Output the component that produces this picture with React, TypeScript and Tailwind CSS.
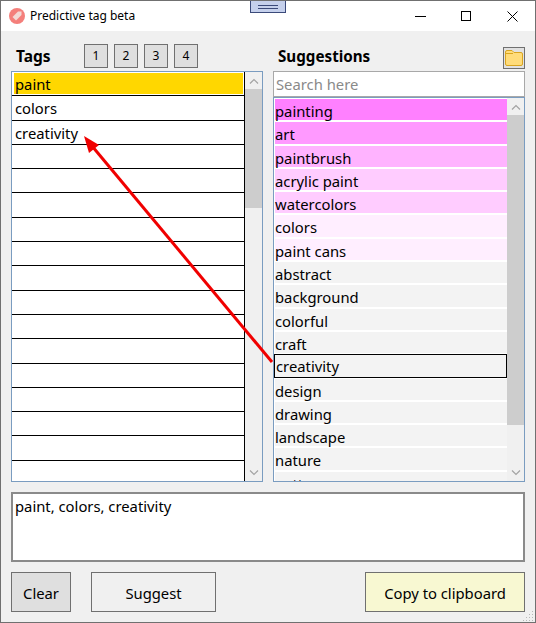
import React from 'react'

const font = "font-['Noto_Sans','Open_Sans',sans-serif]"

const suggestions = [
  { name: 'painting', bg: 'bg-[#ff80ff]' },
  { name: 'art', bg: 'bg-[#ff99ff]' },
  { name: 'paintbrush', bg: 'bg-[#ffb3ff]' },
  { name: 'acrylic paint', bg: 'bg-[#ffccff]' },
  { name: 'watercolors', bg: 'bg-[#ffccff]' },
  { name: 'colors', bg: 'bg-[#ffeeff]' },
  { name: 'paint cans', bg: 'bg-[#ffeeff]' },
  { name: 'abstract', bg: 'bg-[#f3f3f3]' },
  { name: 'background', bg: 'bg-[#f3f3f3]' },
  { name: 'colorful', bg: 'bg-[#f3f3f3]' },
  { name: 'craft', bg: 'bg-[#f3f3f3]' },
  { name: 'creativity', bg: 'bg-[#f3f3f3]', selected: true },
  { name: 'design', bg: 'bg-[#f3f3f3]' },
  { name: 'drawing', bg: 'bg-[#f3f3f3]' },
  { name: 'landscape', bg: 'bg-[#f3f3f3]' },
  { name: 'nature', bg: 'bg-[#f3f3f3]' },
  { name: 'pattern', bg: 'bg-[#f3f3f3]' },
]

const tags = ['paint', 'colors', 'creativity', '', '', '', '', '', '', '', '', '', '', '', '', '', '']

function Chevron({ up }: { up?: boolean }) {
  return (
    <div className="h-[17px] flex items-center justify-center bg-[#f0f0f0] shrink-0">
      <svg width="10" height="6" viewBox="0 0 10 6" fill="none" stroke="#a3a3a3" strokeWidth="1.2">
        <path d={up ? 'M1 5.5 L5 1.5 L9 5.5' : 'M1 0.5 L5 4.5 L9 0.5'} />
      </svg>
    </div>
  )
}

function Scrollbar({ thumb }: { thumb: string }) {
  return (
    <div className="w-[17px] shrink-0 flex flex-col bg-[#f0f0f0]">
      <Chevron up />
      <div className={`${thumb} bg-[#cdcdcd] shrink-0`} />
      <div className="grow" />
      <Chevron />
    </div>
  )
}

export default function App() {
  return (
    <div className={`${font} relative w-[536px] h-[623px] overflow-hidden flex flex-col bg-[#f0f0f0] border border-[#707070] text-black`}>
      {/* title bar */}
      <div className="h-[30px] shrink-0 bg-white flex items-center pl-[8px]">
        <div className="w-4 h-4 rounded-full bg-[#f47f7b] flex items-center justify-center">
          <svg width="12" height="12" viewBox="0 0 12 12">
            <path d="M1.5 7 L7 1.5 L10.5 1.5 L10.5 5 L5 10.5 Z" fill="#f3d9d5" />
          </svg>
        </div>
        <span className="ml-[5px] text-[12px] leading-none">Predictive tag beta</span>
        <div className="ml-auto flex items-center">
          <div className="w-[46px] h-[30px] flex items-center justify-center">
            <div className="w-[11px] h-px bg-black" />
          </div>
          <div className="w-[46px] h-[30px] flex items-center justify-center">
            <div className="w-[10px] h-[10px] border border-black" />
          </div>
          <div className="w-[46px] h-[30px] flex items-center justify-center">
            <svg width="11" height="11" viewBox="0 0 11 11" stroke="black" strokeWidth="1">
              <path d="M0.5 0.5 L10.5 10.5 M10.5 0.5 L0.5 10.5" />
            </svg>
          </div>
        </div>
      </div>

      {/* lists */}
      <div className="flex gap-[10px] px-[10px] h-[451px] shrink-0">
        <div className="w-[252px] shrink-0 flex flex-col">
          <div className="h-[40px] shrink-0 flex items-end pb-[3px]">
            <span className="ml-[5px] w-[68px] text-[15.5px] font-bold leading-[24px]">Tags</span>
            <div className="flex gap-[6px]">
              {['1', '2', '3', '4'].map((n) => (
                <div key={n} className="w-[24px] h-[24px] bg-[#dfdfdf] border border-[#707070] flex items-center justify-center text-[12px]">
                  {n}
                </div>
              ))}
            </div>
          </div>
          <div className="h-[411px] shrink-0 border border-[#7a9cc0] bg-white flex overflow-hidden">
            <div className="grow flex flex-col border-r border-black overflow-hidden">
              {tags.map((t, i) => (
                <div key={i} className="h-[24.3px] shrink-0 border-b border-black bg-white pl-[3px] text-[14.8px] leading-[25px]">
                  {i === 0 ? (
                    <div className="bg-[#ffd700] h-[21px] -ml-[1px] mt-px mr-px pl-px leading-[23px]">{t}</div>
                  ) : (
                    t
                  )}
                </div>
              ))}
            </div>
            <Scrollbar thumb="h-[119px]" />
          </div>
        </div>

        <div className="w-[252px] shrink-0 flex flex-col">
          <div className="h-[40px] shrink-0 flex items-end justify-between pb-[2px]">
            <span className="ml-[5px] text-[15.2px] font-bold leading-[24px] pb-px">Suggestions</span>
            <div className="w-[22px] h-[22px] bg-[#e1e1e1] border border-[#707070] flex items-center justify-center">
              <svg width="20" height="18" viewBox="0 0 20 18">
                <path d="M1.5 3 Q1.5 1.5 3 1.5 L8 1.5 L10 3.5 L17 3.5 Q18.5 3.5 18.5 5 L18.5 15 Q18.5 16.5 17 16.5 L3 16.5 Q1.5 16.5 1.5 15 Z" fill="#ffdc7a" stroke="#d9a520" />
                <path d="M2 4.5 L9 4.5" stroke="#d9a520" />
              </svg>
            </div>
          </div>
          <div className="h-[26px] shrink-0 border border-[#a8a8a8] bg-white pl-[2px] text-[14.8px] leading-[24px] text-[#8a8a8a]">Search here</div>
          <div className="h-[385px] shrink-0 border border-[#7a9cc0] bg-white flex overflow-hidden">
            <div className="grow flex flex-col gap-[2px] pt-[1px] pl-px overflow-hidden">
              {suggestions.map((s) => (
                <div
                  key={s.name}
                  className={
                    s.selected
                      ? 'h-[23.3px] -my-px shrink-0 border border-black -ml-px pl-px text-[14.8px] leading-[23px] bg-[#f3f3f3]'
                      : `h-[21.3px] shrink-0 ${s.bg} text-[14.8px] leading-[24px]`
                  }
                >
                  {s.name}
                </div>
              ))}
            </div>
            <Scrollbar thumb="h-[310px]" />
          </div>
        </div>
      </div>

      {/* output box */}
      <div className="mx-[10px] mt-[10px] h-[70px] shrink-0 border-2 border-[#8a8a8a] bg-white pl-[2px] text-[14.8px] leading-[24px]">
        paint, colors, creativity
      </div>

      {/* buttons */}
      <div className="mx-[10px] mt-[10px] h-[40px] shrink-0 flex text-[14.8px]">
        <div className="w-[60px] bg-[#dfdfdf] border border-[#707070] flex items-center justify-center pt-[3px]">Clear</div>
        <div className="ml-[20px] w-[125px] border border-[#707070] flex items-center justify-center pt-[3px]">Suggest</div>
        <div className="ml-auto w-[160px] bg-[#f8f8d2] border border-[#707070] flex items-center justify-center pt-[3px]">Copy to clipboard</div>
      </div>

      {/* docked handle over the title bar */}
      <div className="absolute left-[249px] top-[-1px] w-[36px] h-[13px] bg-[#c5d0ec] border border-[#3b4a7a] flex flex-col items-center justify-center gap-[2px]">
        <div className="w-[20px] h-px bg-[#3b4a7a]" />
        <div className="w-[20px] h-px bg-[#3b4a7a]" />
      </div>

      {/* arrow over the lists */}
      <svg className="absolute left-[-1px] top-[-1px] pointer-events-none" width="536" height="623" viewBox="0 0 536 623">
        <path d="M272 362 L92 146" stroke="#f00000" strokeWidth="3" fill="none" />
        <path d="M84 136 L99 145 L89 153 Z" fill="#f00000" />
      </svg>

      {/* resize grip */}
      <svg className="absolute right-0 bottom-0" width="12" height="12" viewBox="0 0 12 12" fill="#b8b8b8">
        <rect x="9" y="1" width="1" height="1" />
        <rect x="6" y="4" width="1" height="1" />
        <rect x="9" y="4" width="1" height="1" />
        <rect x="3" y="7" width="1" height="1" />
        <rect x="6" y="7" width="1" height="1" />
        <rect x="9" y="7" width="1" height="1" />
        <rect x="0" y="10" width="1" height="1" />
        <rect x="3" y="10" width="1" height="1" />
        <rect x="6" y="10" width="1" height="1" />
        <rect x="9" y="10" width="1" height="1" />
      </svg>
    </div>
  )
}
